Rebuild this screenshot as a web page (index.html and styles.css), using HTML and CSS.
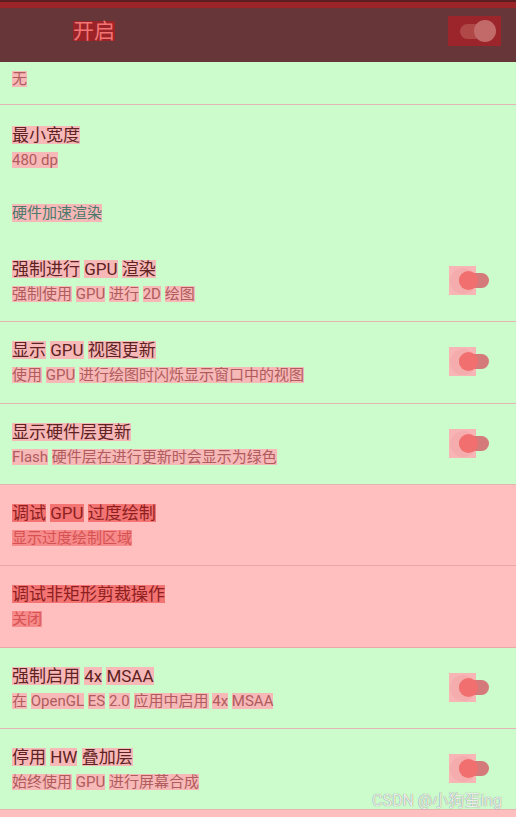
FILE: index.html
```html
<!DOCTYPE html>
<html lang="zh">
<head>
    <meta charset="UTF-8">
    <meta name="viewport" content="width=device-width, initial-scale=1.0">
    <title>开发者选项</title>
    <link rel="stylesheet" href="styles.css">
</head>
<body>
    <div class="statusbar"></div>
    <header class="bar">
        <span class="bar-title"><span class="hl">开</span><span class="hl">启</span></span>
        <div class="bar-switch">
            <span class="bar-track"></span>
            <span class="bar-thumb"></span>
        </div>
    </header>

    <div class="list">
        <div class="row top">
            <div class="sub"><span class="hl">无</span></div>
        </div>

        <div class="row item plain">
            <div class="text">
                <div class="title"><span class="hl">最小宽度</span></div>
                <div class="sub"><span class="hl">480 dp</span></div>
            </div>
        </div>

        <div class="row category">
            <span class="hl">硬件加速渲染</span>
        </div>

        <div class="row item">
            <div class="text">
                <div class="title"><span class="hl">强制进行</span> <span class="hl">GPU</span> <span class="hl">渲染</span></div>
                <div class="sub"><span class="hl">强制使用</span> <span class="hl">GPU</span> <span class="hl">进行</span> <span class="hl">2D</span> <span class="hl">绘图</span></div>
            </div>
            <div class="switch"><span class="sq"></span><span class="ring"></span><span class="track"></span><span class="thumb"></span></div>
        </div>

        <div class="row item">
            <div class="text">
                <div class="title"><span class="hl">显示</span> <span class="hl">GPU</span> <span class="hl">视图更新</span></div>
                <div class="sub"><span class="hl">使用</span> <span class="hl">GPU</span> <span class="hl">进行绘图时闪烁显示窗口中的视图</span></div>
            </div>
            <div class="switch"><span class="sq"></span><span class="ring"></span><span class="track"></span><span class="thumb"></span></div>
        </div>

        <div class="row item">
            <div class="text">
                <div class="title"><span class="hl">显示硬件层更新</span></div>
                <div class="sub"><span class="hl">Flash</span> <span class="hl">硬件层在进行更新时会显示为绿色</span></div>
            </div>
            <div class="switch"><span class="sq"></span><span class="ring"></span><span class="track"></span><span class="thumb"></span></div>
        </div>

        <div class="row item red">
            <div class="text">
                <div class="title"><span class="hl">调试</span> <span class="hl">GPU</span> <span class="hl">过度绘制</span></div>
                <div class="sub"><span class="hl">显示过度绘制区域</span></div>
            </div>
        </div>

        <div class="row item red">
            <div class="text">
                <div class="title"><span class="hl">调试非矩形剪裁操作</span></div>
                <div class="sub"><span class="hl">关闭</span></div>
            </div>
        </div>

        <div class="row item">
            <div class="text">
                <div class="title"><span class="hl">强制启用</span> <span class="hl">4x</span> <span class="hl">MSAA</span></div>
                <div class="sub"><span class="hl">在</span> <span class="hl">OpenGL</span> <span class="hl">ES</span> <span class="hl">2.0</span> <span class="hl">应用中启用</span> <span class="hl">4x</span> <span class="hl">MSAA</span></div>
            </div>
            <div class="switch"><span class="sq"></span><span class="ring"></span><span class="track"></span><span class="thumb"></span></div>
        </div>

        <div class="row item">
            <div class="text">
                <div class="title"><span class="hl">停用</span> <span class="hl">HW</span> <span class="hl">叠加层</span></div>
                <div class="sub"><span class="hl">始终使用</span> <span class="hl">GPU</span> <span class="hl">进行屏幕合成</span></div>
            </div>
            <div class="switch"><span class="sq"></span><span class="ring"></span><span class="track"></span><span class="thumb"></span></div>
        </div>

        <!-- la rangée suivante commence juste sous le bord -->
        <div class="row item red"></div>
    </div>

    <div class="watermark">CSDN @小狗蛋ing</div>
</body>
</html>
```

FILE: styles.css
```css
html, body {
    margin: 0;
    overflow: hidden;
}
body {
    font-family: Roboto, "Noto Sans CJK SC", sans-serif;
    background-color: #ccfccc;
    width: 516px;
    height: 817px;
    position: relative;
}
.statusbar {
    height: 6px;
    background-color: #9b2428;
    border-top: 2px solid #5c1d20;
}
.bar {
    height: 46px;
    padding: 0 15px 8px 73px;
    background-color: #673639;
    display: flex;
    align-items: center;
    justify-content: space-between;
}
.bar-title {
    font-size: 21px;
    color: #f27474;
    display: flex;
}
.bar-title .hl {
    display: inline-block;
    line-height: 20px;
    background-color: #9c2428;
}
.bar-switch {
    position: relative;
    width: 53px;
    height: 30px;
    background-color: #9b252a;
}
.bar-track {
    position: absolute;
    left: 12px;
    top: 8px;
    width: 26px;
    height: 15px;
    border-radius: 8px;
    background-color: #b04848;
}
.bar-thumb {
    position: absolute;
    left: 26px;
    top: 4px;
    width: 22px;
    height: 22px;
    border-radius: 50%;
    background-color: #c26a6a;
}

.list {
    display: flex;
    flex-direction: column;
}
.row {
    padding-left: 12px;
    box-sizing: border-box;
    flex-shrink: 0;
}
.hl {
    display: inline-block;
    background-color: #f7b8b8;
}
.top {
    height: 43px;
    padding-top: 8px;
    border-bottom: 1px solid #e6b3b3;
}
.title {
    font-size: 17px;
    color: #5e2222;
}
.title .hl {
    line-height: 18px;
}
.sub {
    font-size: 15px;
    color: #b05c5c;
}
.sub .hl {
    line-height: 16px;
}
.item {
    height: 81.33px;
    display: flex;
    align-items: center;
    justify-content: space-between;
    border-bottom: 1px solid #e6b3b3;
}
.item.plain {
    height: 80px;
    padding-top: 3px;
    border-bottom: none;
}
.text {
    display: flex;
    flex-direction: column;
    gap: 6px;
}
.category {
    height: 56px;
    padding-top: 19px;
    font-size: 15px;
    color: #4a7a6c;
}
.category .hl {
    line-height: 18px;
}

.red {
    background-color: #ffbfbf;
    border-bottom-color: #eba7a7;
}
.red .hl {
    background-color: #f47474;
}
.red .title {
    color: #8d1f1f;
}
.red .sub {
    color: #d55252;
}
.red .sub .hl {
    background-color: #f78a8a;
}

.switch {
    position: relative;
    width: 41px;
    height: 30px;
    margin-right: 27px;
}
.switch .sq {
    position: absolute;
    left: 1px;
    top: 0;
    width: 27px;
    height: 29px;
    background-color: #f8b5b5;
}
.switch .ring {
    position: absolute;
    left: 2px;
    top: 2px;
    width: 26px;
    height: 26px;
    border-radius: 50%;
    background-color: rgba(220, 110, 110, 0.12);
}
.switch .track {
    position: absolute;
    left: 11px;
    top: 7px;
    width: 30px;
    height: 15px;
    border-radius: 8px;
    background-color: #d47a7a;
}
.switch .thumb {
    position: absolute;
    left: 11px;
    top: 5px;
    width: 19px;
    height: 19px;
    border-radius: 50%;
    background-color: #f26f6f;
}

.watermark {
    position: absolute;
    left: 372px;
    top: 787px;
    font-size: 16px;
    color: #ececec;
    text-shadow: 0 0 1px #6a6a6a;
}
```
